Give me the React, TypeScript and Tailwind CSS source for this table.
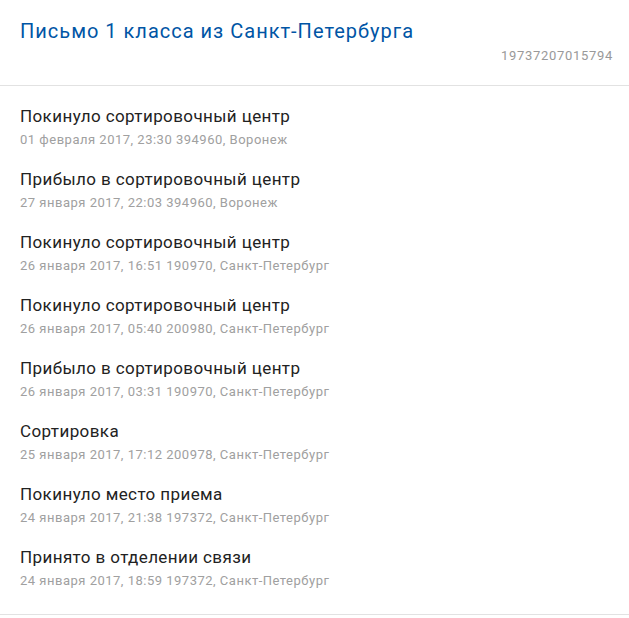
import React from "react";

const items = [
  ["Покинуло сортировочный центр", "01 февраля 2017, 23:30 394960, Воронеж"],
  ["Прибыло в сортировочный центр", "27 января 2017, 22:03 394960, Воронеж"],
  ["Покинуло сортировочный центр", "26 января 2017, 16:51 190970, Санкт-Петербург"],
  ["Покинуло сортировочный центр", "26 января 2017, 05:40 200980, Санкт-Петербург"],
  ["Прибыло в сортировочный центр", "26 января 2017, 03:31 190970, Санкт-Петербург"],
  ["Сортировка", "25 января 2017, 17:12 200978, Санкт-Петербург"],
  ["Покинуло место приема", "24 января 2017, 21:38 197372, Санкт-Петербург"],
  ["Принято в отделении связи", "24 января 2017, 18:59 197372, Санкт-Петербург"],
];

export default function App() {
  return (
    <div className="w-[629px] bg-white" style={{ fontFamily: "Roboto, 'Noto Sans', sans-serif" }}>
      <div className="px-[20px] pt-[18px] pb-[21px] border-b border-[#e2e2e2]">
        <div className="text-[20px] leading-[26px] tracking-[1px] text-[#0055a5]">Письмо 1 класса из Санкт-Петербурга</div>
        <div className="mt-[4px] text-right text-[13px] leading-[16px] tracking-[0.7px] text-[#999999] -mr-[4px]">19737207015794</div>
      </div>
      <div className="px-[20px] pt-[19px] pb-[25px] border-b border-[#e2e2e2] flex flex-col gap-[20px]">
        {items.map(([t, s], i) => (
          <div key={i} className="flex flex-col gap-[5px]">
            <div className="text-[17px] leading-[22px] tracking-[0.4px] text-[#222222]">{t}</div>
            <div className="text-[13px] leading-[16px] tracking-[0.5px] text-[#a0a0a0]">{s}</div>
          </div>
        ))}
      </div>
    </div>
  );
}
